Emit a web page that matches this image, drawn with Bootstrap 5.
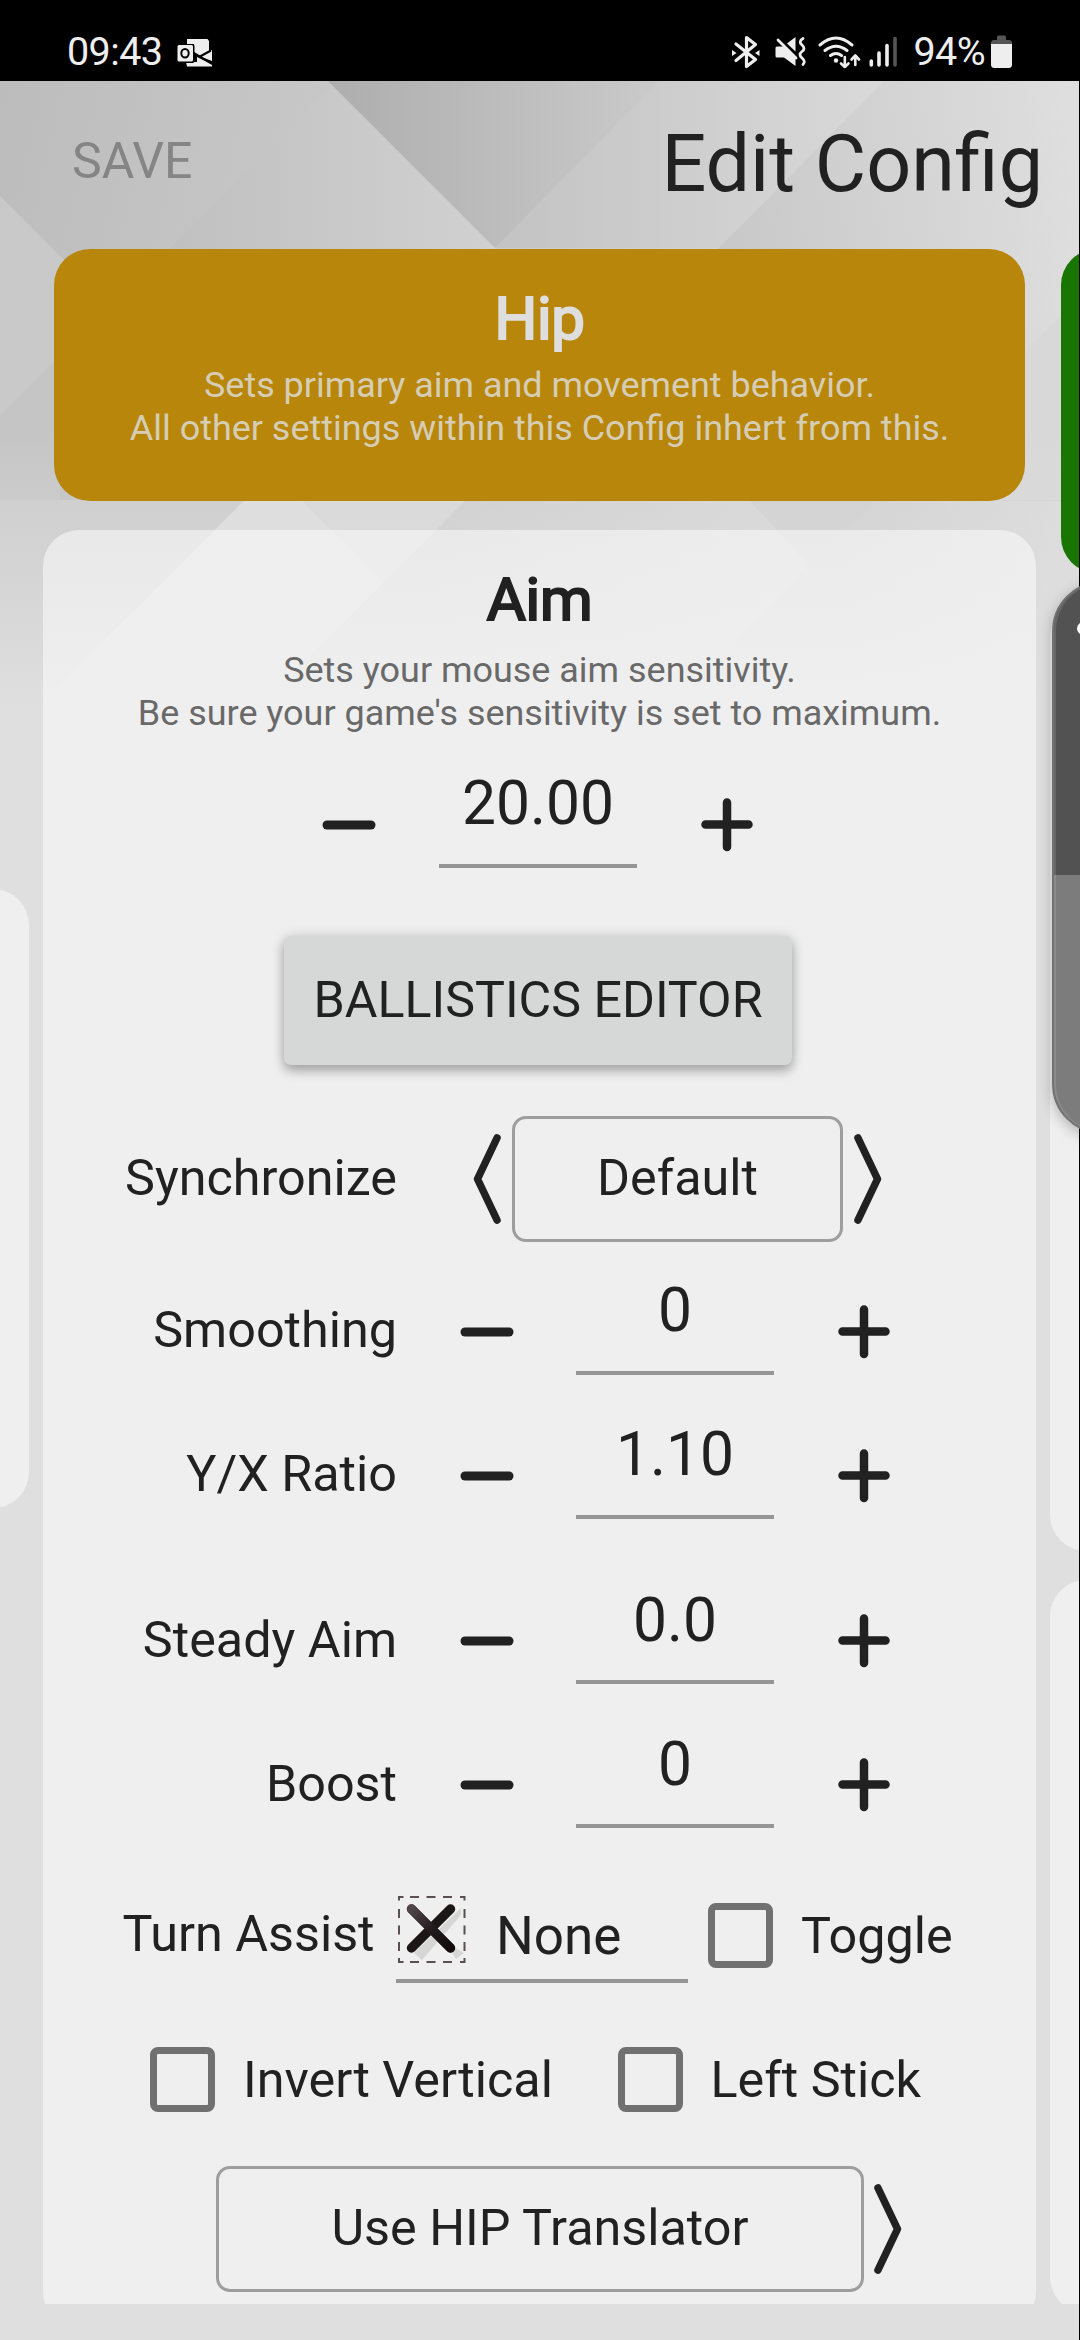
<!DOCTYPE html>
<html lang="en">
<head>
<meta charset="utf-8">
<meta name="viewport" content="width=device-width, initial-scale=1">
<title>Edit Config</title>
<link href="https://cdn.jsdelivr.net/npm/bootstrap@5.3.0/dist/css/bootstrap.min.css" rel="stylesheet">
<style>
  html, body { width: 1080px; height: 2340px; overflow: hidden; }
  body { font-family: Roboto, "Liberation Sans", sans-serif; color: #212121; background: #dfdfdf; line-height: 1.172; }
  svg { display: block; flex: none; }
  .screen { width: 1080px; height: 2340px; }
  .backdrop { left: 0; top: 81px; z-index: 0; }
  .edge-line { left: 1079px; top: 0; width: 1px; height: 2340px; background: #000; z-index: 2; }
  .status { height: 81px; background: #000; color: #eee; padding-left: 67px; padding-right: 67px; padding-top: 23px; z-index: 1; }
  .status-text { font-size: 39.5px; line-height: 58px; letter-spacing: -.6px; }
  .mail-ico { margin: 14px 0 0 15px; }
  .signal-icos { margin: 11px 12px 0 auto; }
  .battery-ico { margin: 12px 0 0 6px; }
  .appbar { height: 168px; padding: 0 37px 0 72px; z-index: 1; }
  .save-btn { font-size: 50px; color: #858585; padding-top: 50.5px; line-height: 59px; }
  .page-title { font-size: 79px; line-height: 93px; padding-top: 36.5px; font-weight: 400; }
  .pager { height: 2055px; z-index: 1; }
  .page-left { width: 29px; margin-right: 14px; }
  .page-main { width: 993px; margin-right: 14px; }
  .page-right { width: 29px; }
  .panel-card { background: rgba(255,255,255,.5); border-radius: 36px; }
  .peek-left { height: 619px; margin-top: 640px; border-radius: 0 36px 36px 0; width: 64px; margin-left: -35px; }
  .peek-green { width: 90px; height: 324px; margin-left: 11px; background: #177500; border-radius: 36px; margin-bottom: 29px; }
  .peek-a { width: 90px; height: 949px; margin-bottom: 29px; }
  .peek-b { width: 90px; height: 733px; }
  .hip-card { margin: 0 11px 29px; height: 252px; padding-top: 34.5px; background: #b8860b; border-radius: 36px; color: #dedede; }
  .card-head { font-size: 60px; line-height: 70px; font-weight: 400; -webkit-text-stroke: 2.2px currentColor; letter-spacing: -.3px; }
  .card-note { font-size: 35.95px; line-height: 43.3px; }
  .hip-card .card-note { margin-top: 10.500px; color: #d6cdb5; }
  .aim-card { height: 1798px; padding-top: 34.5px; }
  .aim-card .card-note { margin-top: 14px; color: #696969; }
  .stepper { height: 144px; }
  .stepper-main { margin-top: 17.5px; padding-left: 279px; }
  .row-label { width: 354px; text-align: right; font-size: 50.3px; padding-bottom: 2px; flex: none; }
  .minus-ico { margin-left: 63px; margin-right: 62px; }
  .stepper-main .minus-ico { margin-left: 0; margin-right: 63px; }
  .plus-ico { margin-left: 64px; }
  .num-field { width: 198px; font-size: 60.5px; line-height: 70px; padding-bottom: 24.5px; border-bottom: 4px solid #959595; margin-bottom: 12px; text-align: center; }
  .flat-btn { width: 508px; height: 129px; margin: 39.5px 0 50.5px 241px; background: #d6d8d7; border-radius: 7px; font-size: 50.2px; box-shadow: 0 6px 11px rgba(0,0,0,.27), 0 0 14px rgba(0,0,0,.12); }
  .line-box { height: 126px; border: 3.5px solid #9e9e9e; border-radius: 14px; font-size: 50.3px; }
  .sync-box { width: 331px; margin: 0 11px; }
  .sync-row { margin-bottom: 18px; }
  .sync-row .row-label { margin-right: 76px; padding-bottom: 0; }
  .trans-box { width: 648px; margin: 0 10px 0 173px; }
  .trans-row { margin-top: 14px; }
  .gap-row { margin-top: 21.5px; }
  .assist-row { height: 144px; margin-top: 6.5px; padding-left: 79.5px; }
  .assist-label { font-size: 50.3px; padding-bottom: 2px; width: 273px; }
  .assist-field { width: 292px; height: 90px; border-bottom: 4px solid #959595; margin-right: 20.5px; font-size: 53px; margin-top: 4px; }
  .assist-field span { padding-left: 30.5px; line-height: 61px; padding-top: 13px; }
  .tick { width: 65px; height: 65px; border: 7px solid #707070; border-radius: 8px; flex: none; margin-right: 28px; }
  .tick-label { font-size: 50.3px; white-space: nowrap; padding-top: 1px; }
  .tick-label-wide { width: 374.500px; }
  .toggle-row { height: 144px; padding-left: 107px; }
  .edge-panel { left: 1052px; top: 581px; width: 100px; height: 553px; border-radius: 50px; z-index: 3; border: 2px solid #727272; background: linear-gradient(#525252 0 292px, #7c7c7c 292px); box-shadow: inset 2px 0 0 rgba(255,255,255,.12), 0 4px 14px rgba(0,0,0,.25); overflow: hidden; }
  .edge-dot { width: 13px; height: 13px; border-radius: 50%; background: #fff; margin: 39px 0 0 23px; }
</style>
</head>
<body>
<svg width="0" height="0" class="position-absolute" aria-hidden="true">
  <symbol id="minus" viewBox="0 0 54 54"><path d="M5 27H49" stroke="#212121" stroke-width="9" stroke-linecap="round"/></symbol>
  <symbol id="plus" viewBox="0 0 52 54"><path d="M4.500 26.500H47.500M26 4.500V49" stroke="#212121" stroke-width="8.500" stroke-linecap="round"/></symbol>
  <symbol id="chev" viewBox="0 0 28 92"><path d="M4 5L23.500 46L4 87" fill="none" stroke="#212121" stroke-width="7.500" stroke-linecap="round" stroke-linejoin="round"/></symbol>
</svg>
<div class="screen position-relative overflow-hidden">
  <svg class="backdrop position-absolute" width="1080" height="720" viewBox="0 81 1080 720">
    <defs>
      <linearGradient id="base" x1="0" y1="0" x2="1" y2=".15"><stop offset="0" stop-color="#bcbcbc"/><stop offset=".32" stop-color="#c8c8c8"/><stop offset=".6" stop-color="#cfcfcf"/><stop offset="1" stop-color="#dfdfdf"/></linearGradient>
      <linearGradient id="dark" gradientUnits="userSpaceOnUse" x1="328" y1="0" x2="660" y2="0"><stop offset="0" stop-color="#aeaeae"/><stop offset="1" stop-color="#cacaca"/></linearGradient>
      <linearGradient id="band" gradientUnits="userSpaceOnUse" x1="495" y1="0" x2="884" y2="0"><stop offset="0" stop-color="#c3c3c3"/><stop offset="1" stop-color="#d9d9d9"/></linearGradient>
      <linearGradient id="mid" gradientUnits="userSpaceOnUse" x1="170" y1="0" x2="495" y2="0"><stop offset="0" stop-color="#c0c0c0"/><stop offset="1" stop-color="#d1d1d1"/></linearGradient>
      <linearGradient id="wedge" gradientUnits="userSpaceOnUse" x1="719" y1="248" x2="1080" y2="200"><stop offset="0" stop-color="#c8c8c8"/><stop offset="1" stop-color="#dedede"/></linearGradient>
      <linearGradient id="gapband" gradientUnits="userSpaceOnUse" x1="437" y1="0" x2="800" y2="0"><stop offset="0" stop-color="#cdcdcd"/><stop offset="1" stop-color="#d8d8d8"/></linearGradient>
      <linearGradient id="gapright" gradientUnits="userSpaceOnUse" x1="847" y1="0" x2="1080" y2="0"><stop offset="0" stop-color="#d0d0d0"/><stop offset="1" stop-color="#dcdcdc"/></linearGradient>
      <linearGradient id="fade" x1="0" y1="0" x2="0" y2="1"><stop offset="0" stop-color="#dfdfdf" stop-opacity="0"/><stop offset="1" stop-color="#dfdfdf"/></linearGradient>
    </defs>
    <path d="M0 81H1080V801H0Z" fill="url(#base)"/>
    <path d="M332 85L495 248L700 453L500 540H0V420L170 248Z" fill="url(#mid)"/>
    <path d="M0 196L110 306L0 416Z" fill="#c9c9c9"/>
    <path d="M0 416L60 356V530L0 570Z" fill="#c5c5c5"/>
    <path d="M660 81H884L719 248H495Z" fill="url(#band)"/>
    <path d="M328 81H660L495 248Z" fill="url(#dark)"/>
    <path d="M884 81H1080V500H465L719 248Z" fill="url(#wedge)"/>
    <path d="M1080 296L1025 352L875 501L700 680H1080Z" fill="#d8d8d8"/>
    <path d="M0 500H1080V801H0Z" fill="#d1d1d1"/>
    <path d="M0 500H244L80 665L0 745Z" fill="#cacaca"/>
    <path d="M244 501L273 472L303 501L385 583L260 801H0V745Z" fill="#dedede"/>
    <path d="M303 501H465L385 583Z" fill="#d8d8d8"/>
    <path d="M465 501H750L810 560L640 801H165Z" fill="url(#gapband)"/>
    <path d="M750 501H875L810 566Z" fill="#cfcfcf"/>
    <path d="M875 501H1080V801H575Z" fill="url(#gapright)"/>
    <rect x="0" y="430" width="1080" height="280" fill="url(#fade)"/>
    <rect x="0" y="709" width="1080" height="100" fill="#dfdfdf"/>
  </svg>

  <header class="status position-relative d-flex align-items-start">
    <span class="status-text">09:43</span>
    <svg class="mail-ico" width="36" height="30" viewBox="176 37 36 30">
      <path d="M186 39H206.500L208 41V52L198 56L193 52V44H186Z" fill="#eee"/>
      <path d="M198 56L211 50V61Z" fill="#eee"/><path d="M185 62H196V57L211 64.500V66.500H186Z" fill="#eee"/>
      <rect x="175.500" y="44" width="18" height="19" rx="2" fill="#000"/><rect x="176.500" y="45" width="15.500" height="16.500" rx="1.500" fill="#eee"/>
      <ellipse cx="184" cy="53.300" rx="3.700" ry="4.300" fill="none" stroke="#000" stroke-width="2"/>
      <path d="M193 53L199 56.500L210 50.500M199 56.500L211 64" stroke="#000" stroke-width="2" fill="none"/>
    </svg>
    <svg class="signal-icos" width="170" height="36" viewBox="729 34 170 36">
      <g fill="none" stroke="#eee" stroke-width="3.200" stroke-linejoin="round" stroke-linecap="round">
        <path d="M734 44L753.500 59.500L744.500 66.500V37.500L753.500 44.500L734 60.500"/>
        <path d="M801 38.500q-5 3 -1 6.500t0 6.500t0 6.500t1 6.500" stroke-width="2.800"/>
        <path d="M818 45Q834 31 850 45M823 50.500Q834 42 845 50.500M828.500 55.500Q834 51.500 839.500 55.500" stroke-width="3"/>
        <path d="M842.800 57V67M839 63.500L842.800 67L846.500 63.500M853.300 65V55.500M849.500 59.500L853.300 55.500L857 59.500" stroke-width="2.600"/>
      </g>
      <path d="M730 50L734.500 53L730 56ZM757.500 50L753 53L757.500 56Z" fill="#eee"/>
      <path d="M773.500 48Q773.500 46.500 775 46.500H782L793.500 58V66L782 57.500H775Q773.500 57.500 773.500 56ZM793.500 37V51.500L785 43.500Z" fill="#eee"/>
      <path d="M776 40L794 58" stroke="#eee" stroke-width="2.800" stroke-linecap="round"/>
      <circle cx="834" cy="60.500" r="2.200" fill="#eee"/>
      <path d="M869.300 61V65" stroke="#eee" stroke-width="3.600" stroke-linecap="round"/>
      <path d="M877 53V65M885 45.500V65" stroke="#eee" stroke-width="3.600" stroke-linecap="round"/>
      <path d="M893 38.500V65" stroke="#555" stroke-width="3.600" stroke-linecap="round"/>
    </svg>
    <span class="status-text">94%</span>
    <svg class="battery-ico" width="22" height="34" viewBox="992 35 22 34">
      <path d="M998 37Q998 35.500 999.500 35.500H1005.500Q1007 35.500 1007 37V40H1010Q1013 40 1013 43V50H992V43Q992 40 995 40H998Z" fill="#555"/>
      <path d="M992 44H1013V64.500Q1013 68 1009.500 68H995.500Q992 68 992 64.500Z" fill="#eee"/>
    </svg>
  </header>

  <nav class="appbar position-relative d-flex justify-content-between align-items-start">
    <span class="save-btn">SAVE</span>
    <h1 class="page-title m-0">Edit Config</h1>
  </nav>

  <main class="pager position-relative d-flex overflow-hidden">
    <section class="page-left flex-shrink-0"><div class="panel-card peek-left"></div></section>
    <section class="page-main flex-shrink-0">
      <div class="hip-card text-center">
        <div class="card-head">Hip</div>
        <div class="card-note">Sets primary aim and movement behavior.<br>All other settings within this Config inhert from this.</div>
      </div>
      <div class="panel-card aim-card">
        <div class="card-head text-center">Aim</div>
        <div class="card-note text-center">Sets your mouse aim sensitivity.<br>Be sure your game's sensitivity is set to maximum.</div>

        <div class="stepper stepper-main d-flex align-items-center">
          <svg class="minus-ico" width="54" height="54"><use href="#minus"/></svg>
          <div class="num-field">20.00</div>
          <svg class="plus-ico" width="52" height="54"><use href="#plus"/></svg>
        </div>

        <div class="flat-btn d-flex align-items-center justify-content-center">BALLISTICS EDITOR</div>

        <div class="sync-row d-flex align-items-center">
          <span class="row-label">Synchronize</span>
          <svg width="28" height="92" viewBox="0 0 28 92"><use href="#chev" transform="translate(28 0) scale(-1 1)" width="28" height="92"/></svg>
          <div class="line-box sync-box d-flex align-items-center justify-content-center">Default</div>
          <svg width="28" height="92"><use href="#chev"/></svg>
        </div>

        <div class="stepper d-flex align-items-center">
          <span class="row-label">Smoothing</span>
          <svg class="minus-ico" width="54" height="54"><use href="#minus"/></svg>
          <div class="num-field">0</div>
          <svg class="plus-ico" width="52" height="54"><use href="#plus"/></svg>
        </div>
        <div class="stepper d-flex align-items-center">
          <span class="row-label">Y/X Ratio</span>
          <svg class="minus-ico" width="54" height="54"><use href="#minus"/></svg>
          <div class="num-field">1.10</div>
          <svg class="plus-ico" width="52" height="54"><use href="#plus"/></svg>
        </div>
        <div class="stepper gap-row d-flex align-items-center">
          <span class="row-label">Steady Aim</span>
          <svg class="minus-ico" width="54" height="54"><use href="#minus"/></svg>
          <div class="num-field">0.0</div>
          <svg class="plus-ico" width="52" height="54"><use href="#plus"/></svg>
        </div>
        <div class="stepper d-flex align-items-center">
          <span class="row-label">Boost</span>
          <svg class="minus-ico" width="54" height="54"><use href="#minus"/></svg>
          <div class="num-field">0</div>
          <svg class="plus-ico" width="52" height="54"><use href="#plus"/></svg>
        </div>

        <div class="assist-row d-flex align-items-center">
          <span class="assist-label flex-shrink-0">Turn Assist</span>
          <div class="assist-field d-flex align-items-start flex-shrink-0">
            <svg width="70" height="70" viewBox="0 0 70 70">
              <defs><linearGradient id="ink" x1="0" y1="0" x2="1" y2="1"><stop offset="0" stop-color="#51454a"/><stop offset=".5" stop-color="#241c1e"/><stop offset="1" stop-color="#120c0d"/></linearGradient></defs>
              <path d="M18 60L65 15V22L26 67Z M50 50L68 60L60 66Z" fill="#d6d6d6"/>
              <path d="M15.500 16L54.500 55M54.500 16L15.500 55" stroke="#1c1617" stroke-width="9.500" stroke-linecap="round"/>
              <path d="M15.500 16L54.500 55" stroke="url(#ink)" stroke-width="9" stroke-linecap="round"/>
              <g fill="none" stroke="#5b4f53" stroke-width="2">
                <path d="M3 7.500V4H7.500M64 4H68.500V7.500M68.500 65V69H64M7.500 69H3V65"/>
                <path d="M14 4H58M14 69H58" stroke-dasharray="9 7.500"/>
                <path d="M3 16V58M68.500 16V58" stroke-dasharray="9 7.500"/>
              </g>
            </svg>
            <span>None</span>
          </div>
          <div class="tick"></div><span class="tick-label">Toggle</span>
        </div>
        <div class="toggle-row d-flex align-items-center">
          <div class="tick"></div><span class="tick-label tick-label-wide">Invert Vertical</span>
          <div class="tick"></div><span class="tick-label">Left Stick</span>
        </div>
        <div class="trans-row d-flex align-items-center">
          <div class="line-box trans-box d-flex align-items-center justify-content-center">Use HIP Translator</div>
          <svg width="28" height="92"><use href="#chev"/></svg>
        </div>
      </div>
    </section>
    <section class="page-right flex-shrink-0">
      <div class="peek-green"></div>
      <div class="panel-card peek-a"></div>
      <div class="panel-card peek-b"></div>
    </section>
  </main>
  <div class="edge-line position-absolute"></div>
  <aside class="edge-panel position-absolute"><div class="edge-dot"></div></aside>
</div>
<script src="https://cdn.jsdelivr.net/npm/bootstrap@5.3.0/dist/js/bootstrap.bundle.min.js"></script>
</body>
</html>
